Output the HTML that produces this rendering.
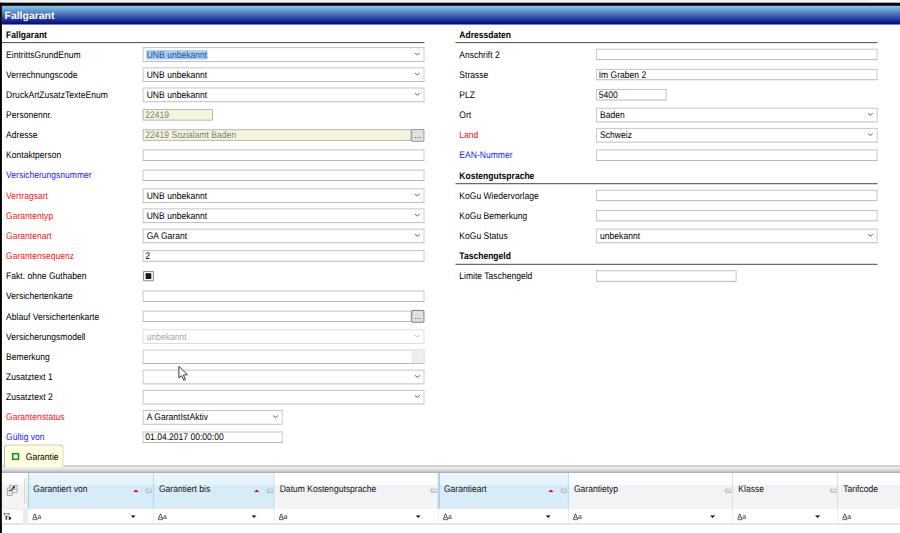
<!DOCTYPE html>
<html lang="de"><head><meta charset="utf-8"><title>Fallgarant</title>
<style>
html,body{margin:0;padding:0;background:#fff;overflow:hidden;width:900px;height:533px}
#stage{position:absolute;left:0;top:0;width:9000px;height:5330px;transform:scale(0.1);transform-origin:0 0;overflow:hidden;background:#fff;font-family:"Liberation Sans",sans-serif}
#stage div,#stage svg{position:absolute;display:block}
#stage .t{line-height:1;white-space:nowrap;text-rendering:geometricPrecision;transform:scaleY(1.12);transform-origin:0 84.65%}
#stage .t span{position:static}
#stage .g{will-change:transform}
#stage .ns{transform:none}
</style></head><body><div id="stage">
<div style="left:0.0px;top:0.0px;width:9000.0px;height:27.0px;background:#f1f1f1;"></div>
<div style="left:8690.0px;top:0.0px;width:310.0px;height:27.0px;background:#fafafa;"></div>
<div style="left:0.0px;top:27.0px;width:9000.0px;height:32.0px;background:#000;"></div>
<div style="left:0.0px;top:27.0px;width:19.0px;height:5303.0px;background:#000;"></div>
<div style="left:19.0px;top:59.0px;width:8981.0px;height:186.0px;background:linear-gradient(to bottom,#84cbea 0%,#4367b5 50%,#000080 100%);"></div>
<div class="t ns" style="left:45.0px;top:98.0px;font-size:104.5px;color:#fff;font-weight:bold;">Fallgarant</div>
<div class="t" style="left:61.0px;top:306.6px;font-size:85.5px;color:#000;font-weight:bold;">Fallgarant</div>
<div style="left:19.0px;top:421.0px;width:4225.0px;height:10.0px;background:#474747;"></div>
<div class="t" style="left:61.0px;top:505.1px;font-size:85.5px;color:#000;">EintrittsGrundEnum</div>
<div style="left:1426.5px;top:473.0px;width:2817.5px;height:145.5px;background:#fff;border:8.0px solid #b4b4b4;box-sizing:border-box;border-color:#b6b6bb #bebec4 #adadb5 #bebec4;"></div>
<div style="left:1462.0px;top:501.0px;width:614.0px;height:94.5px;background:#a8cef6;"></div>
<div class="t" style="left:1467.0px;top:506.6px;font-size:85.5px;color:#28548f;">UNB unbekannt</div>
<svg style="left:4142.0px;top:521.8px;width:62.0px;height:36.5px" viewBox="-1 -1 6.2 3.65"><path d="M0 0 L2.1 1.65 L4.2 0" fill="none" stroke="#5a5a5a" stroke-width="0.95" stroke-linecap="round" stroke-linejoin="round"/></svg>
<div class="t" style="left:61.0px;top:706.6px;font-size:85.5px;color:#000;">Verrechnungscode</div>
<div style="left:1426.5px;top:674.5px;width:2817.5px;height:145.5px;background:#fff;border:8.0px solid #b4b4b4;box-sizing:border-box;border-color:#b6b6bb #bebec4 #adadb5 #bebec4;"></div>
<div class="t" style="left:1467.0px;top:708.1px;font-size:85.5px;color:#000;">UNB unbekannt</div>
<svg style="left:4142.0px;top:723.2px;width:62.0px;height:36.5px" viewBox="-1 -1 6.2 3.65"><path d="M0 0 L2.1 1.65 L4.2 0" fill="none" stroke="#5a5a5a" stroke-width="0.95" stroke-linecap="round" stroke-linejoin="round"/></svg>
<div class="t" style="left:61.0px;top:908.1px;font-size:85.5px;color:#000;">DruckArtZusatzTexteEnum</div>
<div style="left:1426.5px;top:876.0px;width:2817.5px;height:145.5px;background:#fff;border:8.0px solid #b4b4b4;box-sizing:border-box;border-color:#b6b6bb #bebec4 #adadb5 #bebec4;"></div>
<div class="t" style="left:1467.0px;top:909.6px;font-size:85.5px;color:#000;">UNB unbekannt</div>
<svg style="left:4142.0px;top:924.7px;width:62.0px;height:36.5px" viewBox="-1 -1 6.2 3.65"><path d="M0 0 L2.1 1.65 L4.2 0" fill="none" stroke="#5a5a5a" stroke-width="0.95" stroke-linecap="round" stroke-linejoin="round"/></svg>
<div class="t" style="left:61.0px;top:1109.6px;font-size:85.5px;color:#000;">Personennr.</div>
<div style="left:1427.0px;top:1092.0px;width:702.0px;height:113.0px;background:#f5f5dc;border:8.0px solid #a8a8a8;box-sizing:border-box;"></div>
<div class="t" style="left:1453.0px;top:1110.1px;font-size:85.5px;color:#808080;">22419</div>
<div class="t" style="left:61.0px;top:1311.1px;font-size:85.5px;color:#000;">Adresse</div>
<div style="left:1427.0px;top:1293.5px;width:2687.0px;height:113.0px;background:#f5f5dc;border:8.0px solid #a8a8a8;box-sizing:border-box;"></div>
<div class="t" style="left:1453.0px;top:1311.6px;font-size:85.5px;color:#808080;">22419 Sozialamt Baden</div>
<div style="left:4113.0px;top:1290.5px;width:131.0px;height:127.0px;background:#e1e1e1;border:9.0px solid #8c8c8c;box-sizing:border-box;border-radius:9.0px;"></div>
<div class="t ns" style="left:4143.0px;top:1305.6px;font-size:85.5px;color:#333;">...</div>
<div class="t" style="left:61.0px;top:1512.6px;font-size:85.5px;color:#000;">Kontaktperson</div>
<div style="left:1427.0px;top:1495.0px;width:2817.0px;height:113.0px;background:#fff;border:8.0px solid #abadb3;box-sizing:border-box;border-color:#b2b4bb #bcbec5 #a4a6ae #bcbec5;"></div>
<div class="t" style="left:61.0px;top:1714.1px;font-size:85.5px;color:#1c1cff;">Versicherungsnummer</div>
<div style="left:1427.0px;top:1696.5px;width:2817.0px;height:113.0px;background:#fff;border:8.0px solid #abadb3;box-sizing:border-box;border-color:#b2b4bb #bcbec5 #a4a6ae #bcbec5;"></div>
<div class="t" style="left:61.0px;top:1915.6px;font-size:85.5px;color:#ff1414;">Vertragsart</div>
<div style="left:1426.5px;top:1883.5px;width:2817.5px;height:145.5px;background:#fff;border:8.0px solid #b4b4b4;box-sizing:border-box;border-color:#b6b6bb #bebec4 #adadb5 #bebec4;"></div>
<div class="t" style="left:1467.0px;top:1917.1px;font-size:85.5px;color:#000;">UNB unbekannt</div>
<svg style="left:4142.0px;top:1932.2px;width:62.0px;height:36.5px" viewBox="-1 -1 6.2 3.65"><path d="M0 0 L2.1 1.65 L4.2 0" fill="none" stroke="#5a5a5a" stroke-width="0.95" stroke-linecap="round" stroke-linejoin="round"/></svg>
<div class="t" style="left:61.0px;top:2117.1px;font-size:85.5px;color:#ff1414;">Garantentyp</div>
<div style="left:1426.5px;top:2085.0px;width:2817.5px;height:145.5px;background:#fff;border:8.0px solid #b4b4b4;box-sizing:border-box;border-color:#b6b6bb #bebec4 #adadb5 #bebec4;"></div>
<div class="t" style="left:1467.0px;top:2118.6px;font-size:85.5px;color:#000;">UNB unbekannt</div>
<svg style="left:4142.0px;top:2133.8px;width:62.0px;height:36.5px" viewBox="-1 -1 6.2 3.65"><path d="M0 0 L2.1 1.65 L4.2 0" fill="none" stroke="#5a5a5a" stroke-width="0.95" stroke-linecap="round" stroke-linejoin="round"/></svg>
<div class="t" style="left:61.0px;top:2318.6px;font-size:85.5px;color:#ff1414;">Garantenart</div>
<div style="left:1426.5px;top:2286.5px;width:2817.5px;height:145.5px;background:#fff;border:8.0px solid #b4b4b4;box-sizing:border-box;border-color:#b6b6bb #bebec4 #adadb5 #bebec4;"></div>
<div class="t" style="left:1467.0px;top:2320.1px;font-size:85.5px;color:#000;">GA Garant</div>
<svg style="left:4142.0px;top:2335.2px;width:62.0px;height:36.5px" viewBox="-1 -1 6.2 3.65"><path d="M0 0 L2.1 1.65 L4.2 0" fill="none" stroke="#5a5a5a" stroke-width="0.95" stroke-linecap="round" stroke-linejoin="round"/></svg>
<div class="t" style="left:61.0px;top:2520.1px;font-size:85.5px;color:#ff1414;">Garantensequenz</div>
<div style="left:1427.0px;top:2502.5px;width:2817.0px;height:113.0px;background:#fff;border:8.0px solid #abadb3;box-sizing:border-box;border-color:#b2b4bb #bcbec5 #a4a6ae #bcbec5;"></div>
<div class="t" style="left:1453.0px;top:2520.6px;font-size:85.5px;color:#000;">2</div>
<div class="t" style="left:61.0px;top:2721.6px;font-size:85.5px;color:#000;">Fakt. ohne Guthaben</div>
<div style="left:1431.0px;top:2710.5px;width:106.0px;height:100.0px;background:#fff;border:7.5px solid #585858;box-sizing:border-box;border-radius:7.0px;"></div>
<div style="left:1456.0px;top:2732.0px;width:57.0px;height:58.0px;background:#1a1a1a;"></div>
<div class="t" style="left:61.0px;top:2923.1px;font-size:85.5px;color:#000;">Versichertenkarte</div>
<div style="left:1427.0px;top:2905.5px;width:2817.0px;height:113.0px;background:#fff;border:8.0px solid #abadb3;box-sizing:border-box;border-color:#b2b4bb #bcbec5 #a4a6ae #bcbec5;"></div>
<div class="t" style="left:61.0px;top:3124.6px;font-size:85.5px;color:#000;">Ablauf Versichertenkarte</div>
<div style="left:1427.0px;top:3107.0px;width:2687.0px;height:113.0px;background:#fff;border:8.0px solid #abadb3;box-sizing:border-box;border-color:#b2b4bb #bcbec5 #a4a6ae #bcbec5;"></div>
<div style="left:4113.0px;top:3100.0px;width:131.0px;height:127.0px;background:#e1e1e1;border:9.0px solid #707070;box-sizing:border-box;border-radius:9.0px;"></div>
<div class="t ns" style="left:4143.0px;top:3115.1px;font-size:85.5px;color:#333;">...</div>
<div class="t" style="left:61.0px;top:3326.1px;font-size:85.5px;color:#000;">Versicherungsmodell</div>
<div style="left:1426.5px;top:3294.0px;width:2817.5px;height:145.5px;background:#fff;border:8.0px solid #d6d6d6;box-sizing:border-box;"></div>
<div class="t" style="left:1467.0px;top:3327.6px;font-size:85.5px;color:#a8a8a8;">unbekannt</div>
<svg style="left:4142.0px;top:3342.8px;width:62.0px;height:36.5px" viewBox="-1 -1 6.2 3.65"><path d="M0 0 L2.1 1.65 L4.2 0" fill="none" stroke="#b8b8b8" stroke-width="0.95" stroke-linecap="round" stroke-linejoin="round"/></svg>
<div class="t" style="left:61.0px;top:3527.6px;font-size:85.5px;color:#000;">Bemerkung</div>
<div style="left:1427.0px;top:3496.0px;width:2817.0px;height:142.5px;background:#fff;border:8.0px solid #b4b4bc;box-sizing:border-box;border-color:#c0c0c6 #c4c4ca #a6a6ae #c4c4ca;"></div>
<div style="left:4114.0px;top:3504.0px;width:122.0px;height:126.5px;background:#eeeeee;"></div>
<div class="t" style="left:61.0px;top:3729.1px;font-size:85.5px;color:#000;">Zusatztext 1</div>
<div style="left:1426.5px;top:3697.0px;width:2817.5px;height:145.5px;background:#fff;border:8.0px solid #b4b4b4;box-sizing:border-box;border-color:#b6b6bb #bebec4 #adadb5 #bebec4;"></div>
<svg style="left:4142.0px;top:3745.8px;width:62.0px;height:36.5px" viewBox="-1 -1 6.2 3.65"><path d="M0 0 L2.1 1.65 L4.2 0" fill="none" stroke="#5a5a5a" stroke-width="0.95" stroke-linecap="round" stroke-linejoin="round"/></svg>
<div class="t" style="left:61.0px;top:3930.6px;font-size:85.5px;color:#000;">Zusatztext 2</div>
<div style="left:1426.5px;top:3898.5px;width:2817.5px;height:145.5px;background:#fff;border:8.0px solid #b4b4b4;box-sizing:border-box;border-color:#b6b6bb #bebec4 #adadb5 #bebec4;"></div>
<svg style="left:4142.0px;top:3947.2px;width:62.0px;height:36.5px" viewBox="-1 -1 6.2 3.65"><path d="M0 0 L2.1 1.65 L4.2 0" fill="none" stroke="#5a5a5a" stroke-width="0.95" stroke-linecap="round" stroke-linejoin="round"/></svg>
<div class="t" style="left:61.0px;top:4132.1px;font-size:85.5px;color:#ff1414;">Garantenstatus</div>
<div style="left:1426.5px;top:4100.0px;width:1399.5px;height:145.5px;background:#fff;border:8.0px solid #b4b4b4;box-sizing:border-box;border-color:#b6b6bb #bebec4 #adadb5 #bebec4;"></div>
<div class="t" style="left:1467.0px;top:4133.6px;font-size:85.5px;color:#000;">A GarantIstAktiv</div>
<svg style="left:2724.0px;top:4148.8px;width:62.0px;height:36.5px" viewBox="-1 -1 6.2 3.65"><path d="M0 0 L2.1 1.65 L4.2 0" fill="none" stroke="#5a5a5a" stroke-width="0.95" stroke-linecap="round" stroke-linejoin="round"/></svg>
<div class="t" style="left:61.0px;top:4333.6px;font-size:85.5px;color:#1c1cff;">Gültig von</div>
<div style="left:1427.0px;top:4316.0px;width:1399.0px;height:113.0px;background:#fff;border:8.0px solid #abadb3;box-sizing:border-box;border-color:#b2b4bb #bcbec5 #a4a6ae #bcbec5;"></div>
<div class="t" style="left:1453.0px;top:4334.1px;font-size:85.5px;color:#000;">01.04.2017 00:00:00</div>
<div class="t" style="left:4593.0px;top:306.6px;font-size:85.5px;color:#000;font-weight:bold;">Adressdaten</div>
<div style="left:4555.0px;top:421.0px;width:4220.0px;height:10.0px;background:#474747;"></div>
<div class="t" style="left:4593.0px;top:505.1px;font-size:85.5px;color:#000;">Anschrift 2</div>
<div style="left:5961.0px;top:487.5px;width:2814.0px;height:113.0px;background:#fff;border:8.0px solid #abadb3;box-sizing:border-box;border-color:#b2b4bb #bcbec5 #a4a6ae #bcbec5;"></div>
<div class="t" style="left:4593.0px;top:706.6px;font-size:85.5px;color:#000;">Strasse</div>
<div style="left:5961.0px;top:689.0px;width:2814.0px;height:113.0px;background:#fff;border:8.0px solid #abadb3;box-sizing:border-box;border-color:#b2b4bb #bcbec5 #a4a6ae #bcbec5;"></div>
<div class="t" style="left:5987.0px;top:707.1px;font-size:85.5px;color:#000;">Im Graben 2</div>
<div class="t" style="left:4593.0px;top:908.1px;font-size:85.5px;color:#000;">PLZ</div>
<div style="left:5961.0px;top:890.5px;width:704.0px;height:113.0px;background:#fff;border:8.0px solid #abadb3;box-sizing:border-box;border-color:#b2b4bb #bcbec5 #a4a6ae #bcbec5;"></div>
<div class="t" style="left:5987.0px;top:908.6px;font-size:85.5px;color:#000;">5400</div>
<div class="t" style="left:4593.0px;top:1109.6px;font-size:85.5px;color:#000;">Ort</div>
<div style="left:5960.5px;top:1077.5px;width:2814.5px;height:145.5px;background:#fff;border:8.0px solid #b4b4b4;box-sizing:border-box;border-color:#b6b6bb #bebec4 #adadb5 #bebec4;"></div>
<div class="t" style="left:6001.0px;top:1111.1px;font-size:85.5px;color:#000;">Baden</div>
<svg style="left:8673.0px;top:1126.2px;width:62.0px;height:36.5px" viewBox="-1 -1 6.2 3.65"><path d="M0 0 L2.1 1.65 L4.2 0" fill="none" stroke="#5a5a5a" stroke-width="0.95" stroke-linecap="round" stroke-linejoin="round"/></svg>
<div class="t" style="left:4593.0px;top:1311.1px;font-size:85.5px;color:#ff1414;">Land</div>
<div style="left:5960.5px;top:1279.0px;width:2814.5px;height:145.5px;background:#fff;border:8.0px solid #b4b4b4;box-sizing:border-box;border-color:#b6b6bb #bebec4 #adadb5 #bebec4;"></div>
<div class="t" style="left:6001.0px;top:1312.6px;font-size:85.5px;color:#000;">Schweiz</div>
<svg style="left:8673.0px;top:1327.8px;width:62.0px;height:36.5px" viewBox="-1 -1 6.2 3.65"><path d="M0 0 L2.1 1.65 L4.2 0" fill="none" stroke="#5a5a5a" stroke-width="0.95" stroke-linecap="round" stroke-linejoin="round"/></svg>
<div class="t" style="left:4593.0px;top:1512.6px;font-size:85.5px;color:#1c1cff;">EAN-Nummer</div>
<div style="left:5961.0px;top:1495.0px;width:2814.0px;height:113.0px;background:#fff;border:8.0px solid #abadb3;box-sizing:border-box;border-color:#b2b4bb #bcbec5 #a4a6ae #bcbec5;"></div>
<div class="t" style="left:4593.0px;top:1717.1px;font-size:85.5px;color:#000;font-weight:bold;">Kostengutsprache</div>
<div style="left:4555.0px;top:1831.5px;width:4220.0px;height:10.0px;background:#474747;"></div>
<div class="t" style="left:4593.0px;top:1915.6px;font-size:85.5px;color:#000;">KoGu Wiedervorlage</div>
<div style="left:5961.0px;top:1898.0px;width:2814.0px;height:113.0px;background:#fff;border:8.0px solid #abadb3;box-sizing:border-box;border-color:#b2b4bb #bcbec5 #a4a6ae #bcbec5;"></div>
<div class="t" style="left:4593.0px;top:2117.1px;font-size:85.5px;color:#000;">KoGu Bemerkung</div>
<div style="left:5961.0px;top:2099.5px;width:2814.0px;height:113.0px;background:#fff;border:8.0px solid #abadb3;box-sizing:border-box;border-color:#b2b4bb #bcbec5 #a4a6ae #bcbec5;"></div>
<div class="t" style="left:4593.0px;top:2318.6px;font-size:85.5px;color:#000;">KoGu Status</div>
<div style="left:5960.5px;top:2286.5px;width:2814.5px;height:145.5px;background:#fff;border:8.0px solid #b4b4b4;box-sizing:border-box;border-color:#b6b6bb #bebec4 #adadb5 #bebec4;"></div>
<div class="t" style="left:6001.0px;top:2320.1px;font-size:85.5px;color:#000;">unbekannt</div>
<svg style="left:8673.0px;top:2335.2px;width:62.0px;height:36.5px" viewBox="-1 -1 6.2 3.65"><path d="M0 0 L2.1 1.65 L4.2 0" fill="none" stroke="#5a5a5a" stroke-width="0.95" stroke-linecap="round" stroke-linejoin="round"/></svg>
<div class="t" style="left:4593.0px;top:2523.1px;font-size:85.5px;color:#000;font-weight:bold;">Taschengeld</div>
<div style="left:4555.0px;top:2637.5px;width:4220.0px;height:10.0px;background:#474747;"></div>
<div class="t" style="left:4593.0px;top:2721.6px;font-size:85.5px;color:#000;">Limite Taschengeld</div>
<div style="left:5961.0px;top:2704.0px;width:1404.0px;height:113.0px;background:#fff;border:8.0px solid #abadb3;box-sizing:border-box;border-color:#b2b4bb #bcbec5 #a4a6ae #bcbec5;"></div>
<div style="left:40.0px;top:4444.0px;width:596.0px;height:230.0px;background:#fefee0;border:8.5px solid #a9a9a4;border-bottom:none;border-radius:40.0px 40.0px 0 0;box-sizing:border-box"></div>
<div style="left:119.0px;top:4529.0px;width:74.0px;height:72.0px;background:#fff;border:16.5px solid #1e8f1e;box-sizing:border-box;"></div>
<div class="t" style="left:258.0px;top:4529.6px;font-size:85.5px;color:#000;">Garantie</div>
<div style="left:639.0px;top:4653.0px;width:8361.0px;height:16.0px;background:#c7c7cb;"></div>
<div style="left:19.0px;top:4653.0px;width:21.0px;height:16.0px;background:#c7c7cb;"></div>
<div style="left:19.0px;top:4669.0px;width:8981.0px;height:61.0px;background:linear-gradient(to bottom,#f0f0f0 0%,#e4e4e5 35%,#cfcfd2 65%,#b4b4b8 88%,#aeaeb3 100%);"></div>
<div style="left:19.0px;top:4730.0px;width:261.0px;height:359.0px;background:linear-gradient(to bottom,#fefefe 0%,#fbfbfb 31%,#f3f3f5 32.5%,#f4f4f6 100%);"></div>
<div style="left:240.5px;top:4785.0px;width:9.0px;height:249.0px;background:#d4d4d4;"></div>
<div style="left:261.0px;top:4785.0px;width:9.0px;height:249.0px;background:#e0e0e0;"></div>
<div style="left:280.0px;top:4730.0px;width:1256.0px;height:359.0px;background:linear-gradient(to bottom,#edf7fd 0%,#e6f3fb 33%,#d6ebf8 34.5%,#d9edf9 100%);"></div>
<div style="left:280.0px;top:4730.0px;width:10.5px;height:359.0px;background:#92d2f6;"></div>
<div style="left:1529.0px;top:4730.0px;width:10.5px;height:359.0px;background:#92d2f6;"></div>
<div class="t" style="left:333.0px;top:4847.6px;font-size:85.5px;color:#111;">Garantiert von</div>
<svg style="left:1444.0px;top:4877.0px;width:80.0px;height:60.0px" viewBox="0 0 8 6"><path d="M0 3H2.3M2.3 0.5V5.5M2.3 1.5H7.3V4.5H2.3" fill="none" stroke="#abb8c5" stroke-width="0.78"/><path d="M2.3 4.45H7.3" stroke="#abb8c5" stroke-width="0.95"/></svg>
<svg style="left:1331.0px;top:4894.5px;width:56.0px;height:28.0px" viewBox="0 0 5.6 2.8"><path d="M0 2.8L2.8 0L5.6 2.8Z" fill="#f00000"/></svg>
<div style="left:1536.0px;top:4730.0px;width:1208.0px;height:359.0px;background:linear-gradient(to bottom,#edf7fd 0%,#e6f3fb 33%,#d6ebf8 34.5%,#d9edf9 100%);"></div>
<div style="left:2737.0px;top:4730.0px;width:10.5px;height:359.0px;background:#92d2f6;"></div>
<div class="t" style="left:1589.0px;top:4847.6px;font-size:85.5px;color:#111;">Garantiert bis</div>
<svg style="left:2652.0px;top:4877.0px;width:80.0px;height:60.0px" viewBox="0 0 8 6"><path d="M0 3H2.3M2.3 0.5V5.5M2.3 1.5H7.3V4.5H2.3" fill="none" stroke="#abb8c5" stroke-width="0.78"/><path d="M2.3 4.45H7.3" stroke="#abb8c5" stroke-width="0.95"/></svg>
<svg style="left:2539.0px;top:4894.5px;width:56.0px;height:28.0px" viewBox="0 0 5.6 2.8"><path d="M0 2.8L2.8 0L5.6 2.8Z" fill="#f00000"/></svg>
<div style="left:2744.0px;top:4730.0px;width:1642.0px;height:359.0px;background:linear-gradient(to bottom,#ffffff 0%,#fdfdfd 33%,#f1f2f5 34.5%,#f3f4f6 100%);"></div>
<div style="left:4377.0px;top:4730.0px;width:8.0px;height:359.0px;background:#d5d5d5;"></div>
<div class="t" style="left:2797.0px;top:4847.6px;font-size:85.5px;color:#111;">Datum Kostengutsprache</div>
<svg style="left:4294.0px;top:4877.0px;width:80.0px;height:60.0px" viewBox="0 0 8 6"><path d="M0 3H2.3M2.3 0.5V5.5M2.3 1.5H7.3V4.5H2.3" fill="none" stroke="#abb8c5" stroke-width="0.78"/><path d="M2.3 4.45H7.3" stroke="#abb8c5" stroke-width="0.95"/></svg>
<div style="left:4386.0px;top:4730.0px;width:1300.0px;height:359.0px;background:linear-gradient(to bottom,#edf7fd 0%,#e6f3fb 33%,#d6ebf8 34.5%,#d9edf9 100%);"></div>
<div style="left:4379.5px;top:4730.0px;width:10.0px;height:359.0px;background:#c4cbd0;"></div>
<div style="left:4389.5px;top:4730.0px;width:10.5px;height:359.0px;background:#a4d8f6;"></div>
<div style="left:5679.0px;top:4730.0px;width:10.5px;height:359.0px;background:#92d2f6;"></div>
<div class="t" style="left:4439.0px;top:4847.6px;font-size:85.5px;color:#111;">Garantieart</div>
<svg style="left:5594.0px;top:4877.0px;width:80.0px;height:60.0px" viewBox="0 0 8 6"><path d="M0 3H2.3M2.3 0.5V5.5M2.3 1.5H7.3V4.5H2.3" fill="none" stroke="#abb8c5" stroke-width="0.78"/><path d="M2.3 4.45H7.3" stroke="#abb8c5" stroke-width="0.95"/></svg>
<svg style="left:5481.0px;top:4894.5px;width:56.0px;height:28.0px" viewBox="0 0 5.6 2.8"><path d="M0 2.8L2.8 0L5.6 2.8Z" fill="#f00000"/></svg>
<div style="left:5686.0px;top:4730.0px;width:1644.0px;height:359.0px;background:linear-gradient(to bottom,#ffffff 0%,#fdfdfd 33%,#f1f2f5 34.5%,#f3f4f6 100%);"></div>
<div style="left:7321.0px;top:4730.0px;width:8.0px;height:359.0px;background:#d5d5d5;"></div>
<div class="t" style="left:5739.0px;top:4847.6px;font-size:85.5px;color:#111;">Garantietyp</div>
<svg style="left:7238.0px;top:4877.0px;width:80.0px;height:60.0px" viewBox="0 0 8 6"><path d="M0 3H2.3M2.3 0.5V5.5M2.3 1.5H7.3V4.5H2.3" fill="none" stroke="#abb8c5" stroke-width="0.78"/><path d="M2.3 4.45H7.3" stroke="#abb8c5" stroke-width="0.95"/></svg>
<div style="left:7330.0px;top:4730.0px;width:1050.0px;height:359.0px;background:linear-gradient(to bottom,#ffffff 0%,#fdfdfd 33%,#f1f2f5 34.5%,#f3f4f6 100%);"></div>
<div style="left:8371.0px;top:4730.0px;width:8.0px;height:359.0px;background:#d5d5d5;"></div>
<div class="t" style="left:7383.0px;top:4847.6px;font-size:85.5px;color:#111;">Klasse</div>
<svg style="left:8288.0px;top:4877.0px;width:80.0px;height:60.0px" viewBox="0 0 8 6"><path d="M0 3H2.3M2.3 0.5V5.5M2.3 1.5H7.3V4.5H2.3" fill="none" stroke="#abb8c5" stroke-width="0.78"/><path d="M2.3 4.45H7.3" stroke="#abb8c5" stroke-width="0.95"/></svg>
<div style="left:8380.0px;top:4730.0px;width:1220.0px;height:359.0px;background:linear-gradient(to bottom,#ffffff 0%,#fdfdfd 33%,#f1f2f5 34.5%,#f3f4f6 100%);"></div>
<div style="left:9591.0px;top:4730.0px;width:8.0px;height:359.0px;background:#d5d5d5;"></div>
<div class="t" style="left:8433.0px;top:4847.6px;font-size:85.5px;color:#111;">Tarifcode</div>
<div style="left:19.0px;top:5089.0px;width:8981.0px;height:146.0px;background:#fff;"></div>
<div style="left:19.0px;top:5084.0px;width:211.0px;height:10.0px;background:#e6e6e6;"></div>
<div style="left:230.0px;top:5084.0px;width:50.0px;height:157.0px;background:#ebebeb;"></div>
<div style="left:19.0px;top:5232.0px;width:8981.0px;height:16.0px;background:#e0e0e0;"></div>
<div style="left:232.0px;top:5234.0px;width:47.0px;height:14.0px;background:#f3f3f3;"></div>
<div class="t g ns" style="left:323.0px;top:5125.0px;font-size:75.0px;color:#1e1e1e"><span style="text-decoration:underline;text-decoration-thickness:7.0px;text-underline-offset:6.0px">A</span><span style="font-size:70.0px">a</span></div>
<svg style="left:1306.0px;top:5152.0px;width:52.0px;height:28.0px" viewBox="0 0 5.2 2.8"><path d="M0 0H5.2L2.6 2.8Z" fill="#111"/></svg>
<div style="left:1531.0px;top:5089.0px;width:9.0px;height:146.0px;background:#ececec;"></div>
<div class="t g ns" style="left:1579.0px;top:5125.0px;font-size:75.0px;color:#1e1e1e"><span style="text-decoration:underline;text-decoration-thickness:7.0px;text-underline-offset:6.0px">A</span><span style="font-size:70.0px">a</span></div>
<svg style="left:2514.0px;top:5152.0px;width:52.0px;height:28.0px" viewBox="0 0 5.2 2.8"><path d="M0 0H5.2L2.6 2.8Z" fill="#111"/></svg>
<div style="left:2739.0px;top:5089.0px;width:9.0px;height:146.0px;background:#ececec;"></div>
<div class="t g ns" style="left:2787.0px;top:5125.0px;font-size:75.0px;color:#1e1e1e"><span style="text-decoration:underline;text-decoration-thickness:7.0px;text-underline-offset:6.0px">A</span><span style="font-size:70.0px">a</span></div>
<svg style="left:4156.0px;top:5152.0px;width:52.0px;height:28.0px" viewBox="0 0 5.2 2.8"><path d="M0 0H5.2L2.6 2.8Z" fill="#111"/></svg>
<div style="left:4381.0px;top:5089.0px;width:9.0px;height:146.0px;background:#ececec;"></div>
<div class="t g ns" style="left:4429.0px;top:5125.0px;font-size:75.0px;color:#1e1e1e"><span style="text-decoration:underline;text-decoration-thickness:7.0px;text-underline-offset:6.0px">A</span><span style="font-size:70.0px">a</span></div>
<svg style="left:5456.0px;top:5152.0px;width:52.0px;height:28.0px" viewBox="0 0 5.2 2.8"><path d="M0 0H5.2L2.6 2.8Z" fill="#111"/></svg>
<div style="left:5681.0px;top:5089.0px;width:9.0px;height:146.0px;background:#ececec;"></div>
<div class="t g ns" style="left:5729.0px;top:5125.0px;font-size:75.0px;color:#1e1e1e"><span style="text-decoration:underline;text-decoration-thickness:7.0px;text-underline-offset:6.0px">A</span><span style="font-size:70.0px">a</span></div>
<svg style="left:7100.0px;top:5152.0px;width:52.0px;height:28.0px" viewBox="0 0 5.2 2.8"><path d="M0 0H5.2L2.6 2.8Z" fill="#111"/></svg>
<div style="left:7325.0px;top:5089.0px;width:9.0px;height:146.0px;background:#ececec;"></div>
<div class="t g ns" style="left:7373.0px;top:5125.0px;font-size:75.0px;color:#1e1e1e"><span style="text-decoration:underline;text-decoration-thickness:7.0px;text-underline-offset:6.0px">A</span><span style="font-size:70.0px">a</span></div>
<svg style="left:8150.0px;top:5152.0px;width:52.0px;height:28.0px" viewBox="0 0 5.2 2.8"><path d="M0 0H5.2L2.6 2.8Z" fill="#111"/></svg>
<div style="left:8375.0px;top:5089.0px;width:9.0px;height:146.0px;background:#ececec;"></div>
<div class="t g ns" style="left:8423.0px;top:5125.0px;font-size:75.0px;color:#1e1e1e"><span style="text-decoration:underline;text-decoration-thickness:7.0px;text-underline-offset:6.0px">A</span><span style="font-size:70.0px">a</span></div>
<svg style="left:60.0px;top:4840.0px;width:130.0px;height:130.0px" viewBox="0 0 13 13"><rect x="3.4" y="1.4" width="7.7" height="7" fill="#f2f2f2" stroke="#9c9c9c" stroke-width="0.75"/><path d="M6.1 5.6H11.1" stroke="#a8a8a8" stroke-width="0.7"/><rect x="1.2" y="4.1" width="4.9" height="7.5" fill="#fff" stroke="#8c8c8c" stroke-width="0.75"/><path d="M1.2 7.6H6.1M1.2 9.5H6.1" stroke="#b4b4b4" stroke-width="0.6"/><path d="M2.6 6.4H4.6Q6.6 6.3 7.3 4.2" fill="none" stroke="#161616" stroke-width="0.95"/><path d="M9.1 2.1L6.1 3.1L8.3 5.0Z" fill="#111"/></svg>
<svg style="left:32.0px;top:5130.0px;width:85.0px;height:75.0px" viewBox="0 0 8.5 7.5"><path d="M0.4 0.6H6.3L4.0 3.3H2.7Z" fill="#fff" stroke="#5a5a5a" stroke-width="0.75"/><rect x="2.4" y="3.0" width="1.55" height="3.6" fill="#3c3c3c"/><path d="M5.6 3.1L8.4 5.3L5.6 7.5Z" fill="#222"/></svg>
<svg style="left:1775.0px;top:3650.0px;width:120.0px;height:170.0px" viewBox="0 0 12 17"><path d="M1.4 1.3V12.9L4.1 10.6L6.3 15.2L8.0 14.4L5.9 10.0L9.9 9.7Z" fill="#fff" stroke="#303030" stroke-width="0.95" stroke-linejoin="round"/></svg>
</div></body></html>
